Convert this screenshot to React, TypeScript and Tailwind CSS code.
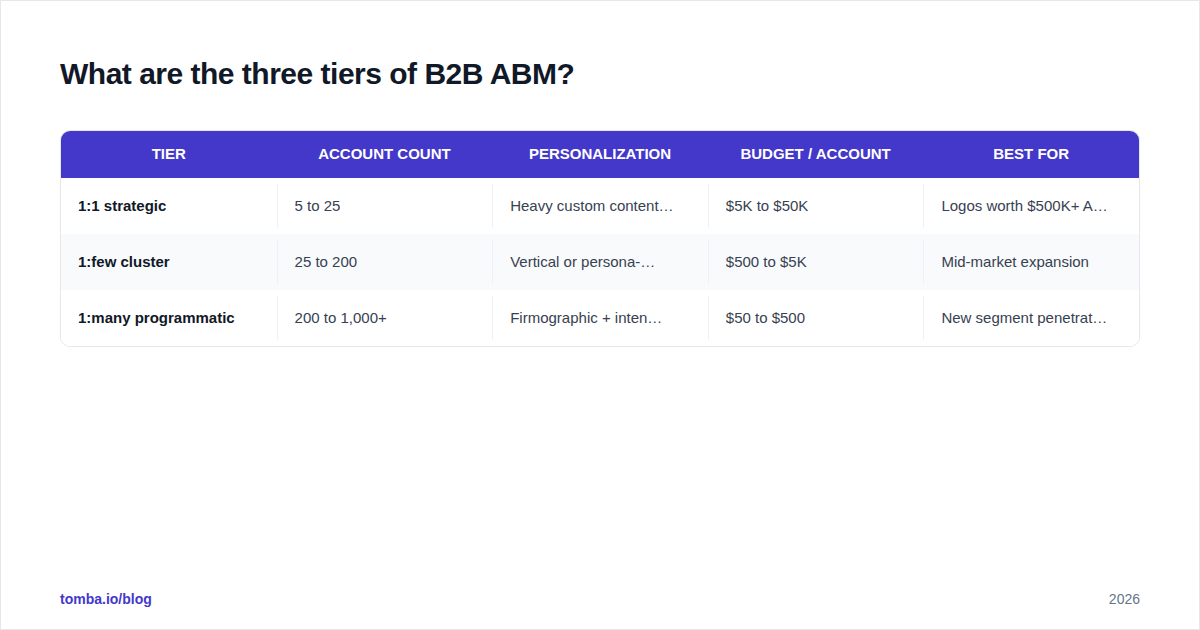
const headers = ['TIER', 'ACCOUNT COUNT', 'PERSONALIZATION', 'BUDGET / ACCOUNT', 'BEST FOR']

// cells are clipped to 20 characters, as in the source card
const rows = [
  ['1:1 strategic', '5 to 25', 'Heavy custom content…', '$5K to $50K', 'Logos worth $500K+ A…'],
  ['1:few cluster', '25 to 200', 'Vertical or persona-…', '$500 to $5K', 'Mid-market expansion'],
  ['1:many programmatic', '200 to 1,000+', 'Firmographic + inten…', '$50 to $500', 'New segment penetrat…'],
]

export default function App() {
  return (
    <div
      className="box-border flex h-[630px] w-[1200px] flex-col border border-gray-200 bg-white px-[59px] pt-[55px] pb-[20px]"
      style={{ fontFamily: '"Liberation Sans", Arial, sans-serif' }}
    >
      <h1 className="text-[30px] leading-9 font-bold tracking-[-0.5px] text-[#111827]">
        What are the three tiers of B2B ABM?
      </h1>

      {/* Table */}
      <div className="mt-[38px] overflow-hidden rounded-[10px] border border-gray-200">
        <div className="-mt-px grid h-12 grid-cols-5 bg-[#4338ca]">
          {headers.map((h) => (
            <div key={h} className="flex items-center justify-center text-[15px] font-bold text-white">
              {h}
            </div>
          ))}
        </div>
        {rows.map((row, i) => (
          <div key={row[0]} className={`grid h-14 grid-cols-5 ${i % 2 === 1 ? 'bg-[#f8fafc]' : 'bg-white'}`}>
            {row.map((cell, j) => (
              <div key={j} className="flex min-w-0 items-stretch py-1.5">
                <div
                  className={`flex w-full min-w-0 items-center px-[17px] ${j > 0 ? 'border-l border-[#eef1f5]' : ''}`}
                >
                  <span
                    className={`truncate text-[15px] ${j === 0 ? 'font-bold text-[#111827]' : 'text-[#374151]'}`}
                  >
                    {cell}
                  </span>
                </div>
              </div>
            ))}
          </div>
        ))}
      </div>

      <div className="mt-auto flex items-center justify-between">
        <span className="text-[14px] leading-5 font-bold text-[#4338ca]">tomba.io/blog</span>
        <span className="text-[14px] leading-5 text-[#64748b]">2026</span>
      </div>
    </div>
  )
}
